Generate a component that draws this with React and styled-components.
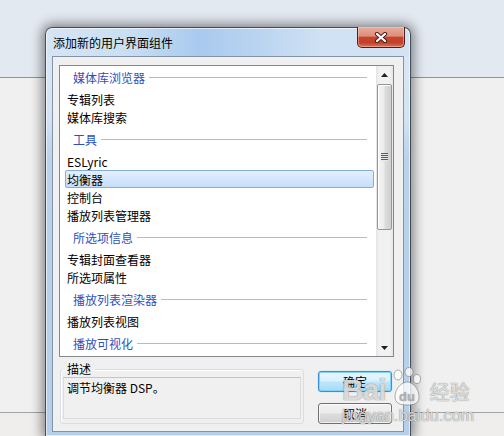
import React from "react";
import styled, { createGlobalStyle } from "styled-components";

const GlobalStyle = createGlobalStyle`
  html, body { margin: 0; padding: 0; }
  body {
    width: 504px;
    height: 436px;
    overflow: hidden;
    font-family: "Noto Sans CJK SC", "Noto Sans", sans-serif;
  }
`;

const Desktop = styled.div`
  position: relative;
  width: 504px;
  height: 436px;
  display: flex;
  flex-direction: column;
  overflow: hidden;
`;

const TopBand = styled.div`
  height: 77px;
  flex: none;
  background: #e3e9f1;
  border-bottom: 1px solid #8e9399;
  box-sizing: content-box;
`;

const MiddleBand = styled.div`
  flex: 1;
  background: #f0f0f0;
  border-bottom: 1px solid #a3a3a3;
`;

const BottomBand = styled.div`
  height: 23px;
  flex: none;
  background: #f0eeec;
`;

const Window = styled.div`
  position: absolute;
  left: 45px;
  top: 27px;
  width: 366px;
  height: 409px;
  box-sizing: border-box;
  display: flex;
  flex-direction: column;
  padding: 0 6px 4px;
  border: 1px solid #434c57;
  border-bottom: none;
  border-radius: 7px 7px 0 0;
  background:
    linear-gradient(90deg, #d6e5f5 0%, #cadff3 22%, #a9caee 42%, #b9d4f0 58%, #cfe1f3 75%, #d4e3f4 100%) top / 100% 29px no-repeat,
    linear-gradient(180deg, #dce8f5 0px, #d3e3f3 90px, #bad2ec 130px, #b5cfea 100%);
  box-shadow: 0 0 12px 3px rgba(0, 0, 0, 0.45), inset 0 0 0 1px rgba(255, 255, 255, 0.6);
`;

const TitleBar = styled.div`
  height: 28px;
  flex: none;
  display: flex;
  justify-content: space-between;
  align-items: flex-start;
  padding-left: 1px;
`;

const Title = styled.div`
  align-self: center;
  font-size: 12px;
  line-height: 16px;
  color: #000;
  margin-top: 1px;
`;

const CloseButton = styled.div`
  width: 48px;
  height: 21px;
  margin-top: -1px;
  margin-right: -1px;
  box-sizing: border-box;
  border: 1px solid #4a221b;
  border-top: none;
  border-radius: 0 0 5px 5px;
  background: linear-gradient(180deg, #e8ab9c 0%, #dc8f7c 45%, #c7452b 52%, #c2412a 78%, #dc7358 100%);
  box-shadow: inset 0 0 0 1px rgba(255, 210, 200, 0.45);
  display: flex;
  align-items: center;
  justify-content: center;
`;

const Client = styled.div`
  flex: 1;
  display: flex;
  flex-direction: column;
  border: 1px solid #8494a7;
  background: #f0f0f0;
  padding: 8px 0 0 6px;
`;

const ListBox = styled.div`
  width: 335px;
  height: 292px;
  flex: none;
  box-sizing: border-box;
  border: 1px solid #828790;
  background: #fff;
  display: flex;
`;

const ListContent = styled.div`
  flex: 1;
  overflow: hidden;
  padding: 0 2px 0 5px;
`;

const GroupHeader = styled.div`
  height: 26px;
  display: flex;
  align-items: center;
  padding: 0 7px 0 8px;
  font-size: 12px;
  color: #2d4fbe;
  &:first-child { margin-top: -2px; }
`;

const HeaderLine = styled.div`
  flex: 1;
  height: 1px;
  margin-left: 4px;
  background: #a7bde6;
`;

const Item = styled.div`
  height: 18px;
  box-sizing: border-box;
  display: flex;
  align-items: center;
  padding-left: 1px;
  font-size: 12px;
  color: #000;
  border: 1px solid ${(p) => (p.$selected ? "#86acdc" : "transparent")};
  border-radius: 2px;
  background: ${(p) => (p.$selected ? "linear-gradient(180deg, #e4effd 0%, #d5e6fc 50%, #c6defb 100%)" : "transparent")};
`;

const ScrollBar = styled.div`
  width: 17px;
  flex: none;
  display: flex;
  flex-direction: column;
  background: linear-gradient(90deg, #e3e3e3 0%, #f1f1f1 18%, #f1f1f1 82%, #e6e6e6 100%);
`;

const ArrowButton = styled.div`
  height: 17px;
  flex: none;
  display: flex;
  align-items: center;
  justify-content: center;
`;

const Thumb = styled.div`
  height: 146px;
  margin: 1px 1px 0;
  flex: none;
  box-sizing: border-box;
  border: 1px solid #969696;
  border-radius: 2px;
  background: linear-gradient(90deg, #f5f5f5 0%, #ececec 45%, #dcdcdc 55%, #d0d0d0 100%);
  box-shadow: inset 1px 1px 0 #fff;
  display: flex;
  align-items: center;
  justify-content: center;
`;

const Grip = styled.div`
  width: 7px;
  height: 8px;
  background: repeating-linear-gradient(180deg, #5c5c5c 0, #5c5c5c 1px, #e8e8e8 1px, #e8e8e8 2px);
`;

const Track = styled.div`
  flex: 1;
`;

const BottomRow = styled.div`
  display: flex;
  margin-top: 5px;
  padding-left: 1px;
  gap: 14px;
`;

const GroupBox = styled.fieldset`
  width: 244px;
  box-sizing: border-box;
  margin: 0;
  min-width: 0;
  padding: 0 2px 3px;
  border: 1px solid #d5dfe5;
  border-radius: 3px;
  box-shadow: inset 1px 1px 0 #fff;
`;

const Legend = styled.legend`
  padding: 0 4px;
  font-size: 12px;
  line-height: 14px;
  color: #000;
`;

const DescBox = styled.div`
  height: 42px;
  margin-top: 1px;
  box-sizing: border-box;
  border: 1px solid #dcdcdc;
  border-top-color: #c4c4c4;
  background: #f0f0f0;
  padding: 2px 3px;
  font-size: 12px;
  line-height: 16px;
  color: #000;
`;

const ButtonColumn = styled.div`
  display: flex;
  flex-direction: column;
  gap: 11px;
  padding-top: 9px;
`;

const DialogButton = styled.div`
  width: 74px;
  height: 21px;
  box-sizing: border-box;
  display: flex;
  align-items: center;
  justify-content: center;
  font-size: 12px;
  color: #000;
  border-radius: 3px;
  border: 1px solid ${(p) => (p.$default ? "#3c8fd0" : "#707070")};
  background: ${(p) =>
    p.$default
      ? "linear-gradient(180deg, #eaf6fd 0%, #d9f0fc 48%, #bee6fd 52%, #a7d9f5 100%)"
      : "linear-gradient(180deg, #f2f2f2 0%, #ebebeb 48%, #dddddd 52%, #cfcfcf 100%)"};
  box-shadow: ${(p) =>
    p.$default ? "inset 0 0 0 1px #7fd3f8, 0 0 1px #5ab8ef" : "inset 0 0 0 1px rgba(255,255,255,0.7)"};
`;

const Watermark = styled.div`
  position: absolute;
  left: 342px;
  top: 361px;
  display: flex;
  flex-direction: column;
  pointer-events: none;
  color: rgba(255, 255, 255, 0.72);
  text-shadow: 0 0 1px rgba(90, 90, 90, 0.55), 0 0 1px rgba(90, 90, 90, 0.55);
  font-family: "Liberation Sans", "Noto Sans CJK SC", sans-serif;
`;

const WatermarkTop = styled.div`
  display: flex;
  align-items: flex-end;
  gap: 3px;
  height: 46px;
`;

const WatermarkBrand = styled.span`
  font-size: 30px;
  font-weight: bold;
  line-height: 34px;
  letter-spacing: -1px;
`;

const WatermarkCn = styled.span`
  font-family: "Noto Sans CJK SC", sans-serif;
  font-size: 20px;
  line-height: 30px;
  margin-left: 4px;
`;

const WatermarkUrl = styled.div`
  font-size: 16px;
  line-height: 18px;
  letter-spacing: 0.2px;
`;

const sections = [
  { title: "媒体库浏览器", items: ["专辑列表", "媒体库搜索"] },
  { title: "工具", items: ["ESLyric", "均衡器", "控制台", "播放列表管理器"] },
  { title: "所选项信息", items: ["专辑封面查看器", "所选项属性"] },
  { title: "播放列表渲染器", items: ["播放列表视图"] },
  { title: "播放可视化", items: [] },
];

const CloseGlyph = () => (
  <svg width="14" height="11" viewBox="0 0 14 11">
    <path d="M3 2 L11 9 M11 2 L3 9" stroke="#4b2019" strokeWidth="4.2" strokeLinecap="round" fill="none" />
    <path d="M3 2 L11 9 M11 2 L3 9" stroke="#ffffff" strokeWidth="2.2" strokeLinecap="round" fill="none" />
  </svg>
);

const ArrowUp = () => (
  <svg width="7" height="4" viewBox="0 0 7 4">
    <path d="M3.5 0 L7 4 L0 4 Z" fill="#1e1e1e" />
  </svg>
);

const ArrowDown = () => (
  <svg width="7" height="4" viewBox="0 0 7 4">
    <path d="M0 0 L7 0 L3.5 4 Z" fill="#1e1e1e" />
  </svg>
);

const Paw = () => (
  <svg width="34" height="40" viewBox="0 0 34 40">
    <g fill="rgba(255,255,255,0.75)" stroke="rgba(110,110,110,0.55)" strokeWidth="1">
      <ellipse cx="9" cy="8" rx="4" ry="5" />
      <ellipse cx="20" cy="5" rx="4" ry="4.5" />
      <ellipse cx="28" cy="12" rx="3.5" ry="4.5" />
      <path d="M6 30 C6 20 14 15 18 15 C24 15 30 22 30 30 C30 37 24 38 18 38 C11 38 6 36 6 30 Z" />
    </g>
    <text x="18" y="34" textAnchor="middle" fontSize="13" fontWeight="bold" fill="rgba(180,180,180,0.6)" fontFamily="Liberation Sans, sans-serif">du</text>
  </svg>
);

export default function App() {
  return (
    <>
      <GlobalStyle />
      <Desktop>
        <TopBand />
        <MiddleBand />
        <BottomBand />
        <Window>
          <TitleBar>
            <Title>添加新的用户界面组件</Title>
            <CloseButton>
              <CloseGlyph />
            </CloseButton>
          </TitleBar>
          <Client>
            <ListBox>
              <ListContent>
                {sections.map((s) => (
                  <React.Fragment key={s.title}>
                    <GroupHeader>
                      {s.title}
                      <HeaderLine />
                    </GroupHeader>
                    {s.items.map((it) => (
                      <Item key={it} $selected={it === "均衡器"}>
                        {it}
                      </Item>
                    ))}
                  </React.Fragment>
                ))}
              </ListContent>
              <ScrollBar>
                <ArrowButton>
                  <ArrowUp />
                </ArrowButton>
                <Thumb>
                  <Grip />
                </Thumb>
                <Track />
                <ArrowButton>
                  <ArrowDown />
                </ArrowButton>
              </ScrollBar>
            </ListBox>
            <BottomRow>
              <GroupBox>
                <Legend>描述</Legend>
                <DescBox>调节均衡器 DSP。</DescBox>
              </GroupBox>
              <ButtonColumn>
                <DialogButton $default>确定</DialogButton>
                <DialogButton>取消</DialogButton>
              </ButtonColumn>
            </BottomRow>
          </Client>
        </Window>
        <Watermark>
          <WatermarkTop>
            <WatermarkBrand>Bai</WatermarkBrand>
            <Paw />
            <WatermarkCn>经验</WatermarkCn>
          </WatermarkTop>
          <WatermarkUrl>jingyan.baidu.com</WatermarkUrl>
        </Watermark>
      </Desktop>
    </>
  );
}
